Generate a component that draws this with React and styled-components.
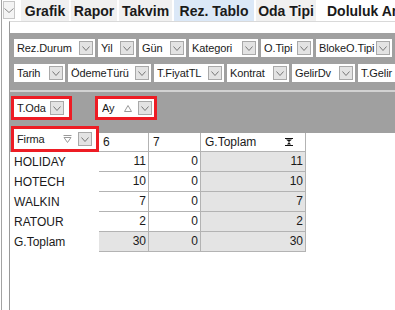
import styled, { createGlobalStyle } from "styled-components";

const GlobalStyle = createGlobalStyle`
  html, body {
    margin: 0;
    padding: 0;
    background: #fff;
    overflow: hidden;
  }
  body {
    font-family: "Liberation Sans", Arial, sans-serif;
    color: #1a1a1a;
  }
`;

const Window = styled.div`
  width: 393px;
  height: 310px;
  margin-left: 1px;
  border-left: 1px solid #a3a3a3;
  display: flex;
  flex-direction: column;
  overflow: hidden;
`;

const TabStrip = styled.div`
  display: flex;
  height: 21px;
  padding-left: 1px;
  flex-shrink: 0;
`;

const MenuButton = styled.div`
  width: 18px;
  height: 18px;
  box-sizing: border-box;
  margin: 1px 6px 0 0;
  border: 1px solid #c6c6c6;
  background: #f4f4f4;
  display: flex;
  align-items: center;
  justify-content: center;
`;

const Tab = styled.div`
  width: ${(p) => p.$w}px;
  flex-shrink: 0;
  margin-right: 2px;
  background: ${(p) => (p.$hover ? "#dbe8f7" : "#f0f0f0")};
  display: flex;
  align-items: center;
  justify-content: center;
  font-size: 14px;
  font-weight: bold;
  white-space: nowrap;
`;

const ActiveTab = styled.div`
  background: #fff;
  padding-left: 9px;
  display: flex;
  align-items: center;
  font-size: 14px;
  font-weight: bold;
  white-space: nowrap;
`;

const Panel = styled.div`
  flex: 1;
  margin-left: 7px;
  border-left: 1px solid #9a9a9a;
  border-top: 1px solid #d9d9d9;
  padding-top: 11px;
`;

const GrayZone = styled.div`
  background: #a0a0a0;
`;

const FilterArea = styled.div`
  display: flex;
  flex-direction: column;
  gap: 7px;
  padding: 6px 0 8px 4px;
`;

const FilterRow = styled.div`
  display: flex;
  gap: 3px;
`;

const Separator = styled.div`
  height: 2px;
  background: #d2d2d2;
`;

const HeaderArea = styled.div`
  height: 34px;
  box-sizing: border-box;
  padding: 4px 0 0 1px;
  display: flex;
  align-items: flex-start;
  gap: 23px;
`;

const Highlight = styled.div`
  border: 3px solid #ed1c24;
  display: flex;
`;

const Field = styled.div`
  width: ${(p) => p.$w}px;
  height: ${(p) => p.$h || 18}px;
  flex-shrink: 0;
  box-sizing: border-box;
  background: #fff;
  display: flex;
  align-items: center;
  padding: 0 ${(p) => p.$pr ?? 2}px 0 ${(p) => p.$pl ?? 3}px;
  font-size: 11px;
  letter-spacing: -0.1px;
  overflow: hidden;
`;

const FieldLabel = styled.span`
  flex: 1;
  white-space: nowrap;
  overflow: hidden;
`;

const DropButton = styled.div`
  width: 14px;
  height: 14px;
  box-sizing: border-box;
  flex-shrink: 0;
  border: 1px solid #a9a9a9;
  background: #e3e3e3;
  display: flex;
  align-items: center;
  justify-content: center;
`;

const SortMark = styled.svg`
  flex-shrink: 0;
  margin-right: 6px;
`;

const PivotGrid = styled.div`
  display: grid;
  grid-template-columns: 89px 50px 52px 105px 1fr;
  grid-auto-rows: 20px;
  grid-template-rows: 26px;
`;

const FirmaCell = styled.div`
  background: #a0a0a0;
  padding-left: 1px;
  display: flex;
`;

const HeadCell = styled.div`
  background: #a0a0a0;
  padding-top: 7px;
  display: flex;
`;

const HeadLabel = styled.div`
  flex: 1;
  background: #fff;
  box-sizing: border-box;
  border-right: ${(p) => (p.$plain ? "none" : "1px solid #b3b3b3")};
  border-bottom: ${(p) => (p.$plain ? "none" : "1px solid #b3b3b3")};
  display: flex;
  align-items: center;
  justify-content: space-between;
  padding: 0 12px 0 4px;
  font-size: 12px;
`;

const RowLabel = styled.div`
  padding-left: 4px;
  font-size: 12px;
  line-height: 20px;
  white-space: nowrap;
  background: #fff;
`;

const ValueCell = styled.div`
  box-sizing: border-box;
  background: ${(p) => (p.$total ? "#e4e4e4" : "#fff")};
  border-right: 1px solid #b3b3b3;
  border-bottom: 1px solid #b3b3b3;
  text-align: right;
  padding-right: 2px;
  font-size: 12px;
  line-height: 19px;
`;

const Blank = styled.div`
  background: #fff;
`;

function Chevron({ w = 9, color = "#6e6e6e" }) {
  return (
    <svg width={w} height="5" viewBox={`0 0 ${w} 5`}>
      <polyline
        points={`0.5,0.5 ${w / 2},4.5 ${w - 0.5},0.5`}
        fill="none"
        stroke={color}
        strokeWidth="1"
      />
    </svg>
  );
}

function FieldButton({ label, w, h, pl, pr, mark }) {
  return (
    <Field $w={w} $h={h} $pl={pl} $pr={pr}>
      <FieldLabel>{label}</FieldLabel>
      {mark === "up" && (
        <SortMark width="8" height="7" viewBox="0 0 8 7">
          <polygon points="4,0.5 7.5,6.5 0.5,6.5" fill="none" stroke="#9a9a9a" />
        </SortMark>
      )}
      {mark === "down" && (
        <SortMark width="9" height="8" viewBox="0 0 9 8">
          <line x1="0.5" y1="0.5" x2="8.5" y2="0.5" stroke="#9a9a9a" />
          <polygon points="1,2.5 8,2.5 4.5,7.5" fill="none" stroke="#9a9a9a" />
        </SortMark>
      )}
      <DropButton>
        <Chevron w={8} color="#777" />
      </DropButton>
    </Field>
  );
}

function SumIcon() {
  return (
    <svg width="8" height="8" viewBox="0 0 8 8">
      <rect x="0" y="0" width="8" height="1" fill="#111" />
      <polygon points="1,1.5 7,1.5 4,4" fill="#111" />
      <polygon points="4,4 2,6.5 6,6.5" fill="#111" />
      <rect x="0" y="7" width="8" height="1" fill="#111" />
    </svg>
  );
}

const filtersTop = [
  ["Rez.Durum", 81],
  ["Yil", 38],
  ["Gün", 47],
  ["Kategori", 69],
  ["O.Tipi", 52],
  ["BlokeO.Tipi", 76],
];

const filtersBottom = [
  ["Tarih", 51],
  ["ÖdemeTürü", 83],
  ["T.FiyatTL", 70],
  ["Kontrat", 62],
  ["GelirDv", 63],
  ["T.Gelir", 70],
];

const tabs = [
  ["Grafik", 48],
  ["Rapor", 46],
  ["Takvim", 53],
  ["Rez. Tablo", 80, true],
  ["Oda Tipi", 60],
];

const rows = [
  ["HOLIDAY", 11, 0, 11],
  ["HOTECH", 10, 0, 10],
  ["WALKIN", 7, 0, 7],
  ["RATOUR", 2, 0, 2],
];

function App() {
  return (
    <>
      <GlobalStyle />
      <Window>
        <TabStrip>
          <MenuButton>
            <Chevron w={10} color="#8a8a8a" />
          </MenuButton>
          {tabs.map(([name, w, hover]) => (
            <Tab key={name} $w={w} $hover={hover}>
              {name}
            </Tab>
          ))}
          <ActiveTab>Doluluk Analizi</ActiveTab>
        </TabStrip>

        <Panel>
          <GrayZone>
            <FilterArea>
              <FilterRow>
                {filtersTop.map(([label, w]) => (
                  <FieldButton key={label} label={label} w={w} />
                ))}
              </FilterRow>
              <FilterRow>
                {filtersBottom.map(([label, w]) => (
                  <FieldButton key={label} label={label} w={w} />
                ))}
              </FilterRow>
            </FilterArea>
            <Separator />
            <HeaderArea>
              <Highlight>
                <FieldButton label="T.Oda" w={55} pr={5} />
              </Highlight>
              <Highlight>
                <FieldButton label="Ay" w={56} pl={4} mark="up" />
              </Highlight>
            </HeaderArea>
          </GrayZone>

          <PivotGrid>
            <FirmaCell>
              <Highlight>
                <FieldButton label="Firma" w={82} h={20} pr={4} mark="down" />
              </Highlight>
            </FirmaCell>
            <HeadCell>
              <HeadLabel>6</HeadLabel>
            </HeadCell>
            <HeadCell>
              <HeadLabel>7</HeadLabel>
            </HeadCell>
            <HeadCell>
              <HeadLabel>
                G.Toplam
                <SumIcon />
              </HeadLabel>
            </HeadCell>
            <HeadCell>
              <HeadLabel $plain />
            </HeadCell>

            {rows.map(([name, a, b, total]) => [
              <RowLabel key={name}>{name}</RowLabel>,
              <ValueCell key={name + "a"}>{a}</ValueCell>,
              <ValueCell key={name + "b"}>{b}</ValueCell>,
              <ValueCell key={name + "t"} $total>
                {total}
              </ValueCell>,
              <Blank key={name + "x"} />,
            ])}

            <RowLabel>G.Toplam</RowLabel>
            <ValueCell $total>30</ValueCell>
            <ValueCell $total>0</ValueCell>
            <ValueCell $total>30</ValueCell>
            <Blank />
          </PivotGrid>
        </Panel>
      </Window>
    </>
  );
}

export default App;
